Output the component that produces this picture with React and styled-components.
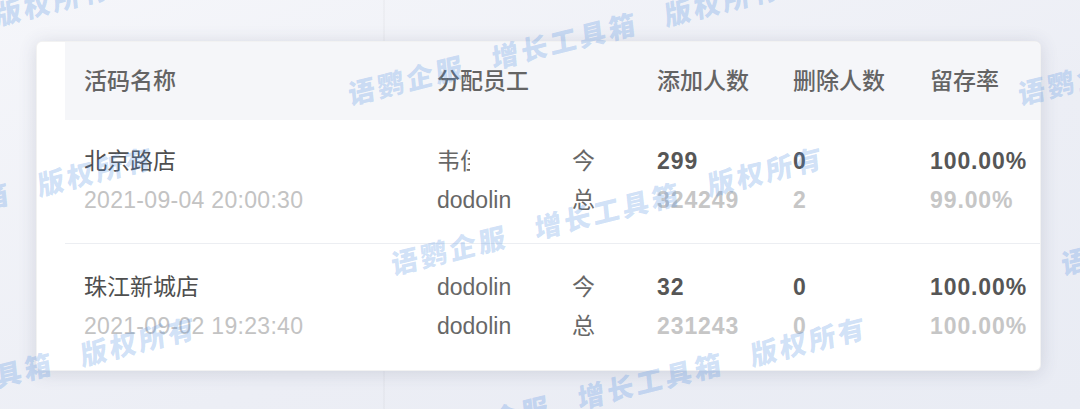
import React from 'react'
import styled, { createGlobalStyle } from 'styled-components'

const GlobalStyle = createGlobalStyle`
  html, body {
    margin: 0;
    padding: 0;
    background: #eef0f5;
    font-family: "Liberation Sans", "Noto Sans CJK SC", sans-serif;
  }
`

const rows = [
  {
    name: '北京路店',
    time: '2021-09-04 20:00:30',
    staff: ['韦', 'dodolin'],
    clipped: true,
    add: ['299', '324249'],
    del: ['0', '2'],
    rate: ['100.00%', '99.00%'],
  },
  {
    name: '珠江新城店',
    time: '2021-09-02 19:23:40',
    staff: ['dodolin', 'dodolin'],
    add: ['32', '231243'],
    del: ['0', '0'],
    rate: ['100.00%', '100.00%'],
  },
]

// watermark tile: start points (bottom-left of first char), repeated every 670px
const marks = [
  [350, 110], [1020, 110], [-320, 110],
  [393, 280], [1063, 280], [-277, 280],
  [436, 450], [-234, 450], [1106, 450],
]

const App = () => {
  return (
    <React.Fragment>
      <GlobalStyle />
      <Page>
        <Card>
          <HeaderRow>
            <HeadCell first>活码名称</HeadCell>
            <HeadCell>分配员工</HeadCell>
            <HeadCell />
            <HeadCell>添加人数</HeadCell>
            <HeadCell>删除人数</HeadCell>
            <HeadCell>留存率</HeadCell>
          </HeaderRow>
          {rows.map((r) => (
            <Row key={r.name}>
              <Cell first>
                <Title>{r.name}</Title>
                <Sub>{r.time}</Sub>
              </Cell>
              <Cell>
                <Staff>
                  {r.staff[0]}
                  {r.clipped && <Clip>佳</Clip>}
                </Staff>
                <Staff>{r.staff[1]}</Staff>
              </Cell>
              <Cell>
                <Staff>今</Staff>
                <Staff>总</Staff>
              </Cell>
              <Cell>
                <Num>{r.add[0]}</Num>
                <Num light>{r.add[1]}</Num>
              </Cell>
              <Cell>
                <Num>{r.del[0]}</Num>
                <Num light>{r.del[1]}</Num>
              </Cell>
              <Cell>
                <Num>{r.rate[0]}</Num>
                <Num light>{r.rate[1]}</Num>
              </Cell>
            </Row>
          ))}
        </Card>
        <MarkLayer>
          {marks.map(([x, y]) => (
            <Mark key={x + '-' + y} style={{ left: x, top: y - 32 }}>
              <span>语鹦企服</span>
              <span>增长工具箱</span>
              <span>版权所有</span>
            </Mark>
          ))}
        </MarkLayer>
      </Page>
    </React.Fragment>
  )
}

export default App

const Page = styled.div`
  position: relative;
  width: 1080px;
  height: 409px;
  overflow: hidden;
  box-sizing: border-box;
  padding-top: 41px;
  padding-left: 36px;
  background:
    linear-gradient(90deg, transparent 383px, rgba(0, 0, 0, 0.025) 383px, rgba(0, 0, 0, 0.025) 385px, transparent 385px),
    linear-gradient(160deg, #f5f6fa 0%, #eceef5 60%, #e9ecf4 100%);
`

const Card = styled.div`
  width: 1005px;
  box-sizing: border-box;
  background: #ffffff;
  border-radius: 6px;
  border: 1px solid rgba(0, 0, 0, 0.05);
  box-shadow: 0 2px 18px rgba(60, 70, 100, 0.16);
  padding-left: 28px;
  overflow: hidden;
`

const grid = `
  display: grid;
  grid-template-columns: 372px 135px 85px 136px 137px 1fr;
`

const HeaderRow = styled.div`
  ${grid}
  height: 78px;
  align-items: center;
  background: #f5f6f9;
`

const HeadCell = styled.div`
  font-size: 23px;
  font-weight: 500;
  color: #646464;
  padding-left: ${(p) => (p.first ? '19px' : '0')};
  padding-bottom: 4px;
`

const Row = styled.div`
  ${grid}
  padding: 22px 0 23px;
  border-bottom: 1px solid #eceef2;
  &:last-child {
    border-bottom: none;
    padding-top: 24px;
    padding-bottom: 24px;
  }
`

const Cell = styled.div`
  display: flex;
  flex-direction: column;
  padding-left: ${(p) => (p.first ? '19px' : '0')};
  line-height: 39px;
  font-size: 23px;
`

const Title = styled.div`
  color: #4f4f4f;
`

const Sub = styled.div`
  color: #c3c3c3;
  letter-spacing: 0.3px;
`

const Staff = styled.div`
  color: #676767;
  white-space: nowrap;
`

const Clip = styled.span`
  display: inline-block;
  width: 10px;
  overflow: hidden;
  vertical-align: top;
`

const Num = styled.div`
  font-weight: 700;
  letter-spacing: 0.9px;
  color: ${(p) => (p.light ? '#c6c6c6' : '#565656')};
`

const MarkLayer = styled.div`
  position: absolute;
  inset: 0;
  pointer-events: none;
  overflow: hidden;
`

const Mark = styled.div`
  position: absolute;
  display: flex;
  gap: 28px;
  white-space: nowrap;
  transform: rotate(-14deg) skewX(-8deg);
  transform-origin: 0 100%;
  font-family: "Noto Sans CJK SC", sans-serif;
  font-size: 27px;
  line-height: 32px;
  font-weight: 900;
  letter-spacing: 3px;
  color: rgba(75, 140, 225, 0.27);
`
